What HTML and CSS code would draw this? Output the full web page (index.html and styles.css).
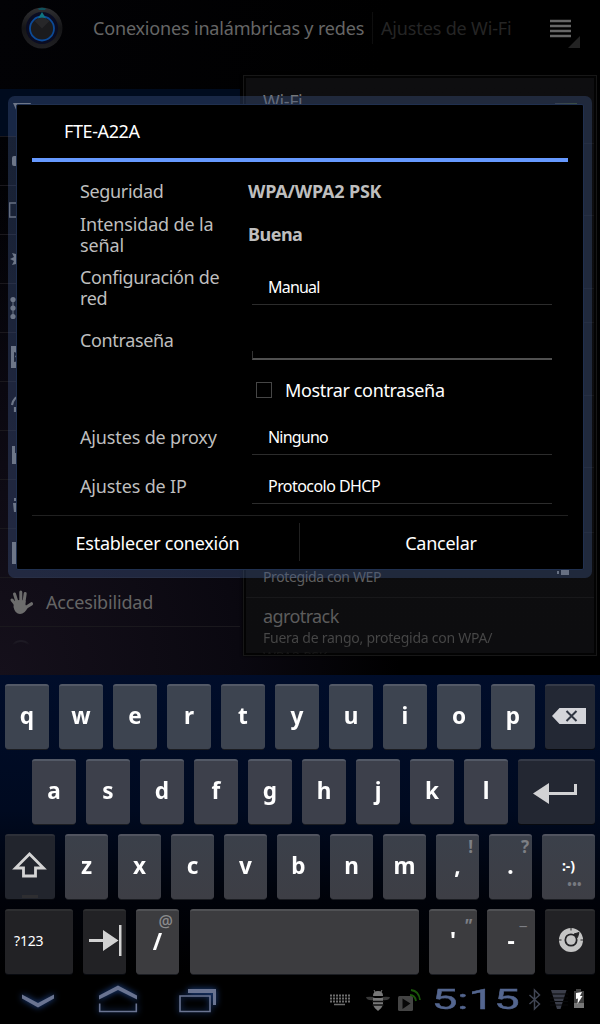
FILE: index.html
```html
<!DOCTYPE html>
<html lang="es">
<head>
<meta charset="utf-8">
<title>Ajustes de Wi-Fi</title>
<link rel="stylesheet" href="styles.css">
</head>
<body>
<main class="app">
  <header class="topbar">
    <svg class="knob" width="44" height="44" viewBox="0 0 44 44">
      <defs><linearGradient id="rim" x1="0" y1="0" x2="0" y2="1"><stop offset="0" stop-color="#303033"/><stop offset=".5" stop-color="#151517"/><stop offset="1" stop-color="#202023"/></linearGradient></defs>
      <circle cx="22" cy="22" r="20.5" fill="url(#rim)"/>
      <circle cx="22" cy="22" r="16" fill="#0a0c22"/>
      <path d="M18 2.500Q22 1 26 2.500L25 4H19Z" fill="#10515c"/>
      <circle cx="22" cy="22.500" r="12" fill="#1b1b1d" stroke="#0c4a96" stroke-width="1.800"/>
      <path d="M22 22.500 14.500 15Q22 8.500 29.500 15Z" fill="#272729"/>
      <path d="M22 6 26 12.500Q22 10.500 18 12.500Z" fill="#0f7580"/>
    </svg>
    <span class="crumb current">Conexiones inalámbricas y redes</span>
    <span class="crumb next">Ajustes de Wi-Fi</span>
    <svg class="menu" width="32" height="30" viewBox="0 0 32 30">
      <path d="M2 3h21M2 8h21M2 13h21M2 18h21" stroke="#666" stroke-width="2.400"/>
      <path d="M32 18v12H20Z" fill="#232323"/>
    </svg>
  </header>
  <div class="panes">
    <nav class="side">
      <div class="item selected"><svg width="24" height="24" viewBox="0 0 24 24"><path d="M4 2h18L13 22Z"/></svg></div>
      <div class="item"><svg width="24" height="24" viewBox="0 0 24 24"><rect x="3" y="7" width="20" height="10" rx="2"/></svg></div>
      <div class="item"><svg width="24" height="24" viewBox="0 0 24 24"><path d="M.7 5h24v14H.7Z" fill="none" stroke="#808080" stroke-width="1.300"/></svg></div>
      <div class="item"><svg width="24" height="24" viewBox="0 0 24 24"><path d="m12 2 2 3 3-2 0 4 4-1-2 4 4 2-4 2 2 4-4-1 0 4-3-2-2 3-2-3-3 2 0-4-4 1 2-4-4-2 4-2-2-4 4 1 0-4 3 2Z"/></svg></div>
      <div class="item"><svg width="24" height="24" viewBox="0 0 24 24"><circle cx="4" cy="3.500" r="2.600"/><circle cx="4" cy="12" r="2.600"/><circle cx="4" cy="20.500" r="2.600"/><path d="M3.500 3h1v18h-1Z"/></svg></div>
      <div class="item"><svg width="24" height="24" viewBox="0 0 24 24"><path fill-rule="evenodd" d="M2 1h19v22H2ZM5 7v10l5-1-1-3-3-1 2-4Z"/></svg></div>
      <div class="item"><svg width="24" height="24" viewBox="0 0 24 24"><path d="M3 11Q5 2 12 2M6 13v5" fill="none" stroke="#8a8a8a" stroke-width="2.200"/></svg></div>
      <div class="item"><svg width="24" height="24" viewBox="0 0 24 24"><path d="M3 3h3v7h12v11H3Z"/></svg></div>
      <div class="item"><svg width="24" height="24" viewBox="0 0 24 24"><path d="M5 6h3v3H5ZM4 11h4v9H5Z"/></svg></div>
      <div class="item"><svg width="24" height="24" viewBox="0 0 24 24"><path d="M3 1h19v22H3Z"/></svg></div>
      <div class="item"><svg width="24" height="26" viewBox="0 0 24 26"><g fill="none" stroke="#6c6c6c" stroke-linecap="round" stroke-width="3"><path d="M7 16 3 11M8 13 5.500 5M11.800 12V3M15 13l1.200-8.500"/><path d="M16 19l6.500-4.200" stroke-width="3.200"/></g><path d="M5 12.500Q10 10 16.500 12v4l2.500 2q-3 7-8 7t-6.500-7Z" fill="#6c6c6c"/></svg><span>Accesibilidad</span></div>
      <div class="item fading"><svg width="24" height="24" viewBox="0 0 24 24"><circle cx="12" cy="12" r="10" fill="none" stroke="#24222b" stroke-width="2"/></svg></div>
    </nav>
    <section class="networks">
      <div class="net first"><span class="name">Wi-Fi</span><i class="tick"></i></div>
      <div class="net tall"></div><div class="net tall"></div><div class="net head"></div>
      <div class="net tall"></div><div class="net tall2"></div><div class="net mid"></div>
      <div class="net wep"><span class="info">Protegida con WEP</span>
        <svg width="16" height="12" viewBox="0 0 16 12"><path d="M0 0h16v5H8V2H5L3 5Z"/><path d="M7 3h8v8H7Z"/><path d="M3 7h2v3H3Z"/></svg></div>
      <div class="net last"><span class="name">agrotrack</span><span class="info">Fuera de rango, protegida con WPA/<br>WPA2 PSK</span></div>
    </section>
  </div>

  <section class="dialog">
    <h1>FTE-A22A</h1>
    <div class="form">
      <label class="up">Seguridad</label><b>WPA/WPA2 PSK</b>
      <label class="wide">Intensidad de la señal</label><b class="good">Buena</b>
      <label>Configuración de red</label><div class="spinner manual">Manual</div>
      <label>Contraseña</label><div class="password"></div>
      <span></span><div class="check"><i></i><span>Mostrar contraseña</span></div>
      <label class="wide">Ajustes de proxy</label><div class="spinner proxy">Ninguno</div>
      <label class="wide">Ajustes de IP</label><div class="spinner ip">Protocolo DHCP</div>
    </div>
    <footer><button class="connect">Establecer conexión</button><button class="cancel">Cancelar</button></footer>
  </section>
</main>

<section class="keyboard">
  <div class="row r1">
    <div class="key"><span>q</span></div><div class="key"><span>w</span></div><div class="key"><span>e</span></div><div class="key"><span>r</span></div><div class="key"><span>t</span></div><div class="key"><span>y</span></div><div class="key"><span>u</span></div><div class="key"><span>i</span></div><div class="key"><span>o</span></div><div class="key"><span>p</span></div>
    <div class="key dark w50"><svg width="50" height="65" viewBox="0 0 50 65"><path d="M7 32 14.500 24H41v16H14.500Z" fill="#d4d5da"/><path d="m21.500 27 10 10m0-10-10 10" stroke="#303642" stroke-width="2"/></svg></div>
  </div>
  <div class="row r2">
    <div class="key"><span>a</span></div><div class="key"><span>s</span></div><div class="key"><span>d</span></div><div class="key"><span>f</span></div><div class="key"><span>g</span></div><div class="key"><span>h</span></div><div class="key"><span>j</span></div><div class="key"><span>k</span></div><div class="key"><span>l</span></div>
    <div class="key dark w77"><svg width="77" height="65" viewBox="0 0 77 65"><path d="M15 34.500 31 24v9h25V25h3v11H31v9Z" fill="#d2d2d4"/></svg></div>
  </div>
  <div class="row r3">
    <div class="key dark w50"><svg width="50" height="65" viewBox="0 0 50 65"><path d="M24.500 20 10.500 34H18.500v8H30.500V34H38.500Z" fill="none" stroke="#d4d4d4" stroke-width="2.800"/><path d="M17 61h16v3H17Z" fill="#2e2e31"/></svg></div>
    <div class="key"><span>z</span></div><div class="key"><span>x</span></div><div class="key"><span>c</span></div><div class="key"><span>v</span></div><div class="key"><span>b</span></div><div class="key"><span>n</span></div><div class="key"><span>m</span></div><div class="key"><span>,</span><sup>!</sup></div><div class="key"><span>.</span><sup class="q">?</sup></div>
    <div class="key w53 smile">:-)<sub>•••</sub></div>
  </div>
  <div class="row r4">
    <div class="key dark w68 sym">?123</div>
    <div class="key dark"><svg width="43" height="65" viewBox="0 0 43 65"><path d="M6 30h14V21l15.500 10.500L20 42V33H6ZM36 16h2.500v31H36Z" fill="#d2d2d2"/></svg></div>
    <div class="key slash"><span>/</span><sup class="at">@</sup></div><div class="key space"></div><div class="key w48"><span>'</span><sup class="dq">"</sup></div><div class="key w48"><span>-</span><sup class="us">_</sup></div>
    <div class="key dark w50"><svg width="50" height="65" viewBox="0 0 50 65"><circle cx="26" cy="31" r="9.300" fill="none" stroke="#c4c4c4" stroke-width="5.500"/><circle cx="26" cy="31" r="4.800" fill="#c4c4c4"/><path d="M34 23.500 29 25l3.500 3.500ZM26 18.500v3M13.500 31h3M35.500 31h3" fill="#242426" stroke="#242426"/></svg></div>
  </div>
</section>

<footer class="system">
  <svg class="nav" width="220" height="48" viewBox="0 0 220 48">
    <g fill="#6a7491">
      <path d="m22 18.500 16 8.500 16-8.500v4L38 31.500 22 22.500Z"/>
      <path d="m99 19.500 19-10 19 10v4l-19-9.500-19 9.500Z"/>
      <path d="M188 13h28v16h-3V17h-25Z"/>
    </g>
    <path d="M99.700 27.500v8h36.600v-8M180 20h30v15.500h-30Z" fill="none" stroke="#6a7491" stroke-width="1.600"/>
  </svg>
  <div class="tray">
    <svg class="kb" width="20" height="12" viewBox="0 0 20 12"><path d="M0 1.500h20M0 4.500h20M0 7.500h20" stroke="#6c6c6c" stroke-width="2" stroke-dasharray="2 1"/><path d="M4 10.500h11" stroke="#6c6c6c" stroke-width="1.500"/></svg>
    <svg class="bee" width="24" height="24" viewBox="0 0 24 24"><path d="M0 9q7-1 9 1l6 0q2-2 9-1-1 4-8 3H8Q1 13 0 9Z" fill="#383838"/><path d="M7 8q0-5 5-5t5 5Z" fill="#777"/><path d="m8 2 1 2m7-2-1 2" stroke="#777"/><path d="M7 10h10v7q-1 3-5 6-4-3-5-6Z" fill="#777"/><path d="M6 13.500h12M6 17h12" stroke="#111" stroke-width="1.300"/></svg>
    <svg class="play" width="24" height="24" viewBox="0 0 24 24"><rect y="8" width="15" height="15" rx="1.500" fill="#444"/><path d="m4.500 10.500 8 5-8 5.500Z" fill="#080808"/><path d="M12 7q5 0 6 6M13 2q8 1 9 10" fill="none" stroke="#1a570a" stroke-width="1.800"/></svg>
    <span class="clock"><span>5:15</span></span>
    <svg class="stat" width="60" height="24" viewBox="0 0 60 24"><path d="m1.500 7 10 9L6.500 21V2L11.500 7l-10 9" fill="none" stroke="#404553" stroke-width="1.500"/><path d="M23 2h15.500L32.500 21h-3.500Z" fill="#3b3e4a"/><path d="M22 6h18M22 10h18M22 13.500h18M22 17h18" stroke="#08090b"/><path d="M48 1h5v2h3v17H46V3h2Z" fill="#414141"/><path d="M46 15h10v5H46Z" fill="#777"/><path d="m48 5 6-1-2 4h2.500L49.500 16l.5-5.500-2 .5Z" fill="#fff"/></svg>
  </div>
</footer>
</body>
</html>
```
FILE: styles.css
```css
* { box-sizing: border-box; }
body { margin: 0; width: 600px; height: 1024px; display: flex; flex-direction: column; overflow: hidden; background: #000; color: #fff; font-family: "Noto Sans", "Open Sans", sans-serif; font-size: 18px; letter-spacing: -.35px; }
svg { display: block; flex: none; }

.app { position: relative; height: 675px; overflow: hidden; background: radial-gradient(ellipse 400px 480px at 0 100%, #15101b, #0a0810 60%, transparent), linear-gradient(100deg, #020205, #000 55%); }
.topbar { display: flex; align-items: center; height: 57px; padding: 0 20px; }
.knob { margin: -1px 29px 0 0; }
.crumb { white-space: nowrap; height: 32px; margin-top: -1px; line-height: 32px; }
.current { width: 280px; color: #666; border-right: 1px solid #0e0e0e; letter-spacing: -.17px; }
.next { margin-left: 8px; color: #252525; letter-spacing: -.15px; }
.menu { margin: 9px 0 0 auto; }
.panes { display: flex; height: 600px; }

.side { width: 243px; padding-top: 32px; }
.item { display: flex; align-items: center; width: 240px; height: 49px; padding-left: 9px; gap: 13px; border-bottom: 1px solid #1a181d; color: #656565; letter-spacing: -.18px; }
.item svg { fill: #8a8a8a; }
.item.selected { height: 48px; background: #000b1e; }
.item.fading { border: 0; height: 30px; align-items: flex-start; padding-top: 12px; overflow: hidden; -webkit-mask-image: linear-gradient(#0009 50%, transparent 60%); mask-image: linear-gradient(#0009 50%, transparent 60%); }

.networks { width: 354px; height: 581px; margin-top: 18px; padding: 2px; border: 1px solid #171717; background: linear-gradient(#0e0e10, #0d0d0f) content-box, #030303; overflow: hidden; box-shadow: 0 0 3px #000; }
.net { height: 65px; padding: 0 17px; border-bottom: 1px solid #18181a; color: #5c5c5c; display: flex; }
.net.tall { height: 73px; } .net.tall:nth-child(2) { height: 72px; } .net.head { height: 34px; } .net.tall2 { height: 72px; }
.first { height: 66px; align-items: flex-start; justify-content: space-between; }
.first .name { line-height: 46px; color: #777; }
.tick { width: 22px; height: 2px; margin-top: 25px; background: linear-gradient(90deg, #333, #394b18); }
.info { font-size: 14px; color: #4c4c4c; letter-spacing: -.25px; }
.wep { align-items: flex-start; justify-content: space-between; }
.wep .info { line-height: 20px; margin-top: 34px; color: #606060; letter-spacing: -.38px; }
.wep svg { margin: 31px 7px 0 0; fill: #808080; }
.last { height: 56px; flex-direction: column; padding-top: 7px; overflow: hidden; border: 0; }
.last .name { line-height: 23px; letter-spacing: -.6px; }
.last .info { line-height: 19px; background: linear-gradient(#4a4a4a, #444 17px, #1c1c1c 22px, #111 28px); -webkit-background-clip: text; background-clip: text; color: transparent; }

.dialog { position: absolute; left: 16px; top: 104px; width: 568px; height: 466px; background: #000; border: 1px solid #20304f; border-radius: 2px; box-shadow: 0 0 0 8px rgba(62, 86, 134, .38); }
.dialog h1 { height: 57px; margin: 0 15px; padding-left: 32px; border-bottom: 4px solid #6699ff; font-size: 18px; line-height: 53px; font-weight: 400; letter-spacing: -.4px; }
.form { display: grid; grid-template-columns: 168px 304px; grid-template-rows: 24px 62px 43px 62px 39px 55px 43px; align-items: center; height: 353px; margin: 0 15px; padding: 18px 0 0 48px; line-height: 21px; color: #bebebe; }
.form label { padding-right: 16px; }
.form .up, .form b { margin-top: -2px; }
.form .wide { letter-spacing: -.15px; }
.form b { font-weight: 700; letter-spacing: -.2px; }
.form b.good { letter-spacing: -.5px; }
.spinner { height: 39px; line-height: 43px; margin-left: 4px; width: 300px; padding-left: 16px; border-bottom: 1px solid #2c2c2c; font-size: 16px; letter-spacing: -.55px; color: #fff; align-self: start; }
.manual, .proxy { letter-spacing: -.8px; }
.proxy { margin-top: 6px; }
.password { width: 300px; height: 9px; margin: 42px 0 0 4px; align-self: start; border-bottom: 2px solid #505050; border-left: 1px solid #333; }
.check { display: flex; align-items: center; margin-top: -1px; color: #fff; padding-left: 8px; gap: 13px; }
.check i { width: 16px; height: 16px; border: 1px solid #464646; }
.dialog footer { display: flex; align-items: center; height: 52px; margin: 0 15px; border-top: 1px solid #202020; }
.dialog button { font: inherit; letter-spacing: -.25px; color: #fff; background: none; border: 0; padding: 2px 0 0; height: 38px; width: 268px; }
.dialog .connect { border-right: 1px solid #202020; padding-right: 16px; }
.dialog .cancel { padding-left: 14px; }

.keyboard { height: 301px; padding: 9px 5px 0; background: linear-gradient(#000d2a, #000a20 45%, #000209 75%, #000); }
.row { display: flex; gap: 10px; height: 75px; }
.key { position: relative; width: 44px; height: 65px; flex: none; border-radius: 3px; border-top: 2px solid #535966; background: #3d4450; box-shadow: 0 2px 0 -1px #1b1d22; text-align: center; font-size: 24px; font-weight: 700; line-height: 58px; letter-spacing: 0; }
.key > span { display: block; transform: scaleX(.94); }
.key svg { margin-top: -2px; }
.r2 { padding-left: 27px; }
.r2 .key { background: #3d404b; }
.r3 .key { width: 43px; background: linear-gradient(#3b404a, #3d3e45); border-color: #51545f; }
.r4 .key { width: 43px; background: #3c3c3f; border-color: #505154; }
.key.dark { background: #232834; border-color: #353a47; box-shadow: 0 1px 0 #080a0f; }
.r2 .key.dark { background: #232732; }
.r3 .key.dark { background: #22252d; border-color: #2d3038; }
.r4 .key.dark { background: #222225; border-color: #2d2e30; }
.row .w50 { width: 50px; } .row .w77 { width: 77px; } .row .w53 { width: 53px; } .r4 .w68 { width: 68px; } .r4 .w48 { width: 48px; } .r4 .space { width: 229px; margin-left: 1px; }
.key sup { position: absolute; right: 6px; top: 0; line-height: 22px; font-size: 17px; color: #7d7f85; }
.key sup.q { right: 3px; }
.key sup.at { font-weight: 500; font-size: 16px; line-height: 20px; color: #8b8b8d; }
.slash > span { line-height: 24px; padding-top: 18px; }
.key sup.dq { right: 5px; top: 3px; font-style: italic; font-size: 18px; }
.key sup.us { right: 8px; top: -3px; font-size: 17px; font-weight: 500; }
.key.smile { font-size: 14px; line-height: 60px; }
.smile sub { position: absolute; right: 13px; bottom: 9px; font-size: 12px; line-height: 10px; color: #777980; letter-spacing: .4px; }
.key.sym { font-size: 14px; font-weight: 400; text-align: left; padding-left: 9px; line-height: 60px; letter-spacing: -.2px; }

.system { display: flex; height: 48px; background: #000; justify-content: space-between; }
.nav { filter: drop-shadow(0 0 3px #2450a0); }
.tray { display: flex; align-items: center; padding-right: 12px; }
.kb { margin-right: 16px; }
.bee { margin-right: 9px; }
.play { margin-right: 11px; }
.clock { width: 86px; margin-right: 9px; color: #54668f; font: 27.5px/50px Roboto, sans-serif; letter-spacing: 0; }
.clock span { display: inline-block; transform: scaleX(1.66); transform-origin: 2px 50%; -webkit-text-stroke: .4px #54668f; }
.kb, .bee { position: relative; left: 1px; }
```
